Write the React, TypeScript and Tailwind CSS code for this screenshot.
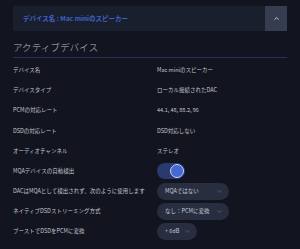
import { ChevronDown, ChevronUp } from "lucide-react";

const FONT = { fontFamily: '"Noto Sans CJK JP", "Noto Sans", sans-serif' };

const rows: { label: string; value: string }[] = [
  { label: "デバイス名", value: "Mac miniのスピーカー" },
  { label: "デバイスタイプ", value: "ローカル接続されたDAC" },
  { label: "PCMの対応レート", value: "44.1, 48, 88.2, 96" },
  { label: "DSDの対応レート", value: "DSD対応しない" },
  { label: "オーディオチャンネル", value: "ステレオ" },
];

function Select({ text, wide }: { text: string; wide?: boolean }) {
  return (
    <div
      className={`flex h-[17px] items-center justify-between rounded-full bg-[#282e40] pl-[8px] pr-[6px] text-[5.5px] text-[#c9ccd4] ${
        wide ? "w-[72px]" : "w-[40px]"
      }`}
    >
      <span>{text}</span>
      <ChevronDown size={7} strokeWidth={1.5} className="text-[#8a90a0]" />
    </div>
  );
}

export default function App() {
  return (
    <div className="h-[249px] w-[300px] overflow-hidden bg-[#121520] px-[13px] pt-[6px]" style={FONT}>
      {/* Device header */}
      <div className="flex h-[25px] items-stretch bg-[#1a1f2d]">
        <div className="flex flex-1 items-center pl-[10px] text-[6.5px] font-bold text-[#3f62c8]">
          デバイス名 : Mac miniのスピーカー
        </div>
        <div className="flex w-[22px] items-center justify-center bg-[#363d51]">
          <ChevronUp size={7} strokeWidth={3} className="text-[#d8dbe2]" />
        </div>
      </div>

      <div className="mt-[7px] h-[18px] text-[9.6px] leading-[18px] font-light text-[#b9bdc6]">アクティブデバイス</div>
      <div className="mt-[1px] h-px bg-[#2a3058]" />

      <div className="mt-[2px] text-[5.5px] text-[#c2c5cd]">
        {rows.map((r) => (
          <div key={r.label} className="flex h-[20.2px] items-center">
            <div className="w-[144px]">{r.label}</div>
            <div>{r.value}</div>
          </div>
        ))}

        <div className="flex h-[20.2px] items-center">
          <div className="w-[144px]">MQAデバイスの自動検出</div>
          <div className="flex h-[16px] w-[28px] items-center justify-end rounded-full bg-[#2b3a6e] pr-[1px]">
            <div className="h-[14px] w-[14px] rounded-full border border-[#c8d2f0] bg-[#4569d4]" />
          </div>
        </div>

        <div className="flex h-[20.2px] items-center">
          <div className="w-[144px]">DACはMQAとして検出されず、次のように使用します</div>
          <Select text="MQAではない" wide />
        </div>
        <div className="flex h-[20.2px] items-center">
          <div className="w-[144px]">ネイティブDSDストリーミング方式</div>
          <Select text="なし：PCMに変換" wide />
        </div>
        <div className="flex h-[20.2px] items-center">
          <div className="w-[144px]">ブーストでDSDをPCMに変換</div>
          <Select text="+ 6dB" />
        </div>
      </div>
    </div>
  );
}
